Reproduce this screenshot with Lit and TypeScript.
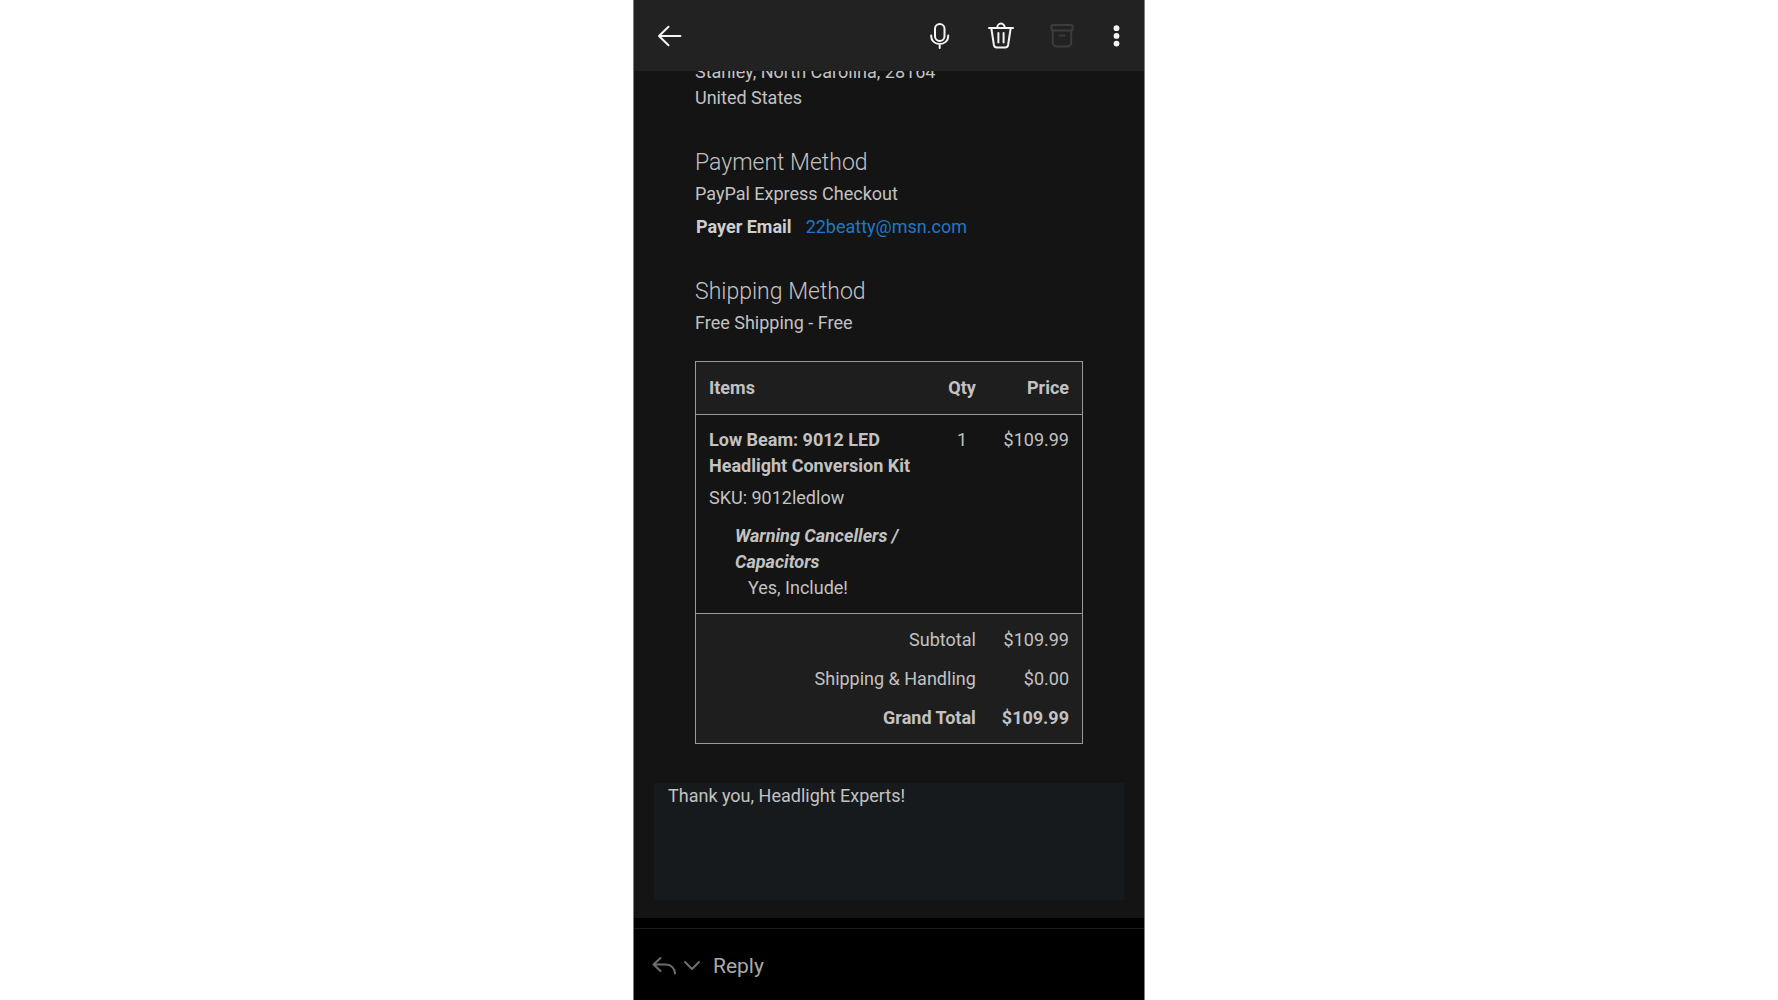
import { LitElement, html, css } from "lit";
import { customElement } from "lit/decorators.js";

interface Total {
  label: string;
  amount: string;
  strong?: boolean;
}

const TOTALS: Total[] = [
  { label: "Subtotal", amount: "$109.99" },
  { label: "Shipping & Handling", amount: "$0.00" },
  { label: "Grand Total", amount: "$109.99", strong: true },
];

@customElement("mail-toolbar")
class MailToolbar extends LitElement {
  static styles = css`
    :host {
      display: block;
      background: #222222;
    }
    .bar {
      display: flex;
      align-items: center;
      gap: 29px;
      height: 71px;
      padding: 0 17px 0 20px;
      box-sizing: border-box;
    }
    .button {
      display: flex;
      padding: 0;
      border: 0;
      background: none;
      color: #f4f4f4;
      cursor: pointer;
    }
    .back {
      margin-right: auto;
    }
    .button:disabled {
      color: #3c3c3c;
      cursor: default;
    }
    svg {
      display: block;
      fill: none;
      stroke: currentColor;
      stroke-width: 2;
      stroke-linecap: round;
      stroke-linejoin: round;
    }
    .dots {
      fill: currentColor;
      stroke: none;
    }
  `;

  render() {
    return html`
      <header class="bar">
        <button class="button back" aria-label="Back">
          <svg width="32" height="32" viewBox="0 0 32 32">
            <path d="M26.4 16H5M14.5 6.7L5 16l9.5 9.3" />
          </svg>
        </button>
        <button class="button" aria-label="Dictate">
          <svg width="32" height="32" viewBox="0 0 32 32">
            <rect x="11" y="4" width="9.5" height="17" rx="4.75" />
            <path d="M7.2 15.5v1a8.5 7.6 0 0 0 17 0v-1M15.7 24.2V28" />
          </svg>
        </button>
        <button class="button" aria-label="Delete">
          <svg width="32" height="32" viewBox="0 0 32 32">
            <path d="M4 8h24M6.3 8l2.6 17a3 3 0 0 0 3 2.4h8.2a3 3 0 0 0 3-2.4L25.7 8M12.2 8a3.8 4.4 0 0 1 7.6 0M13.4 13v9.4M18.6 13v9.4" />
          </svg>
        </button>
        <button class="button" aria-label="Archive" disabled>
          <svg width="32" height="32" viewBox="0 0 32 32">
            <rect x="5.5" y="5" width="21" height="5.6" rx="1" />
            <path d="M6.8 10.6v12a4 4 0 0 0 4 4h10.4a4 4 0 0 0 4-4V10.6M13.5 15.5h5" />
          </svg>
        </button>
        <button class="button" aria-label="More options">
          <svg class="dots" width="20" height="32" viewBox="0 0 20 32">
            <circle cx="9.5" cy="8.2" r="2.9" />
            <circle cx="9.5" cy="15.9" r="2.9" />
            <circle cx="9.5" cy="23.6" r="2.9" />
          </svg>
        </button>
      </header>
    `;
  }
}

@customElement("order-table")
class OrderTable extends LitElement {
  static styles = css`
    :host {
      display: block;
    }
    .table {
      width: 100%;
      border-collapse: separate;
      border-spacing: 0;
      border: 1px solid #9a9a9a;
    }
    th,
    td {
      padding: 12px 13px 0;
      text-align: right;
      vertical-align: top;
      font-weight: 400;
    }
    .head th {
      padding: 13px;
      background: #1e1e1e;
      border-bottom: 1px solid #9a9a9a;
      font-weight: 700;
    }
    .head .left,
    .left {
      text-align: left;
    }
    .qty,
    .head .qty {
      text-align: center;
    }
    .item td {
      padding: 12px 13px;
      border-bottom: 1px solid #9a9a9a;
    }
    .totals th,
    .totals td {
      padding-top: 13px;
      background: #1e1e1e;
    }
    .totals tr:last-child > * {
      padding-bottom: 12px;
    }
    .totals .strong > * {
      font-weight: 700;
    }
    p,
    dl,
    dd {
      margin: 0;
    }
    .name {
      font-weight: 700;
    }
    .sku {
      margin-top: 6px;
    }
    .options {
      margin: 12px 0 0 26px;
    }
    .option {
      font-weight: 700;
      font-style: italic;
    }
    .value {
      margin-left: 13px;
    }
  `;

  render() {
    return html`
      <table class="table">
        <thead class="head">
          <tr>
            <th class="left" scope="col">Items</th>
            <th class="qty" scope="col">Qty</th>
            <th scope="col">Price</th>
          </tr>
        </thead>
        <tbody>
          <tr class="item">
            <td class="left">
              <p class="name">Low Beam: 9012 LED Headlight Conversion Kit</p>
              <p class="sku">SKU: 9012ledlow</p>
              <dl class="options">
                <dt class="option">Warning Cancellers / Capacitors</dt>
                <dd class="value">Yes, Include!</dd>
              </dl>
            </td>
            <td class="qty">1</td>
            <td>$109.99</td>
          </tr>
        </tbody>
        <tfoot class="totals">
          ${TOTALS.map(
            (t) => html`
              <tr class=${t.strong ? "strong" : ""}>
                <th colspan="2" scope="row">${t.label}</th>
                <td>${t.amount}</td>
              </tr>
            `,
          )}
        </tfoot>
      </table>
    `;
  }
}

@customElement("reply-bar")
class ReplyBar extends LitElement {
  static styles = css`
    :host {
      display: block;
      background: #000000;
      padding-top: 10px;
    }
    .bar {
      display: flex;
      align-items: center;
      gap: 6px;
      height: 72px;
      box-sizing: border-box;
      padding: 2px 17px 0;
      border-top: 1px solid #1c1c1c;
    }
    .button {
      display: flex;
      align-items: center;
      padding: 0;
      border: 0;
      background: none;
      color: #6e6e6e;
      cursor: pointer;
    }
    .label {
      margin-left: 6px;
      color: #a9a9a9;
      font: 400 21px/24px Roboto, sans-serif;
    }
    svg {
      display: block;
      fill: none;
      stroke: currentColor;
      stroke-width: 2;
      stroke-linecap: round;
      stroke-linejoin: round;
    }
  `;

  render() {
    return html`
      <footer class="bar">
        <button class="button" aria-label="Reply to sender">
          <svg width="26" height="24" viewBox="0 0 26 24">
            <path d="M9.5 4L2.5 10.5l7 6.5M2.5 10.5H15a9 9 0 0 1 9 9" />
          </svg>
        </button>
        <button class="button" aria-label="Reply options">
          <svg width="18" height="24" viewBox="0 0 18 24">
            <path d="M2 8l7 7 7-7" />
          </svg>
        </button>
        <button class="button label">Reply</button>
      </footer>
    `;
  }
}

@customElement("app-root")
class AppRoot extends LitElement {
  static styles = css`
    :host {
      display: block;
      min-height: 100vh;
      background: #ffffff;
      font: 400 18px/26px Roboto, sans-serif;
    }
    .screen {
      display: flex;
      flex-direction: column;
      box-sizing: border-box;
      max-width: 512px;
      min-height: 100vh;
      margin: 0 auto;
      border: solid #7c7c7c;
      border-width: 0 1px;
      background: #141414;
      color: #c2c2c2;
    }
    .message {
      flex: 1;
      overflow: hidden;
      padding: 0 20px 18px;
    }
    .order {
      padding: 0 41px;
    }
    /* The message is scrolled, so the first address line runs under the toolbar. */
    .address {
      margin: -12px 0 0;
      font-style: normal;
    }
    .title {
      margin: 36px 0 2px;
      font-size: 23px;
      line-height: 32px;
      font-weight: 300;
    }
    .text {
      margin: 0;
    }
    .payer {
      display: flex;
      gap: 14px;
      margin: 7px 0 0;
      padding-left: 1px;
    }
    .payer dt {
      font-weight: 700;
      color: #cecece;
    }
    .payer dd {
      margin: 0;
    }
    .link {
      color: #1f78c8;
      text-decoration: none;
    }
    .items {
      margin-top: 25px;
    }
    .thanks {
      min-height: 117px;
      margin: 39px 0 0;
      padding: 0 14px;
      box-sizing: border-box;
      background: #161a1c;
    }
  `;

  render() {
    return html`
      <div class="screen">
        <mail-toolbar></mail-toolbar>
        <main class="message">
          <div class="order">
            <address class="address">
              Stanley, North Carolina, 28164<br />United States
            </address>
            <h2 class="title">Payment Method</h2>
            <p class="text">PayPal Express Checkout</p>
            <dl class="payer">
              <dt>Payer Email</dt>
              <dd><a class="link" href="mailto:22beatty@msn.com">22beatty@msn.com</a></dd>
            </dl>
            <h2 class="title">Shipping Method</h2>
            <p class="text">Free Shipping - Free</p>
            <order-table class="items"></order-table>
          </div>
          <p class="thanks">Thank you, Headlight Experts!</p>
        </main>
        <reply-bar></reply-bar>
      </div>
    `;
  }
}
